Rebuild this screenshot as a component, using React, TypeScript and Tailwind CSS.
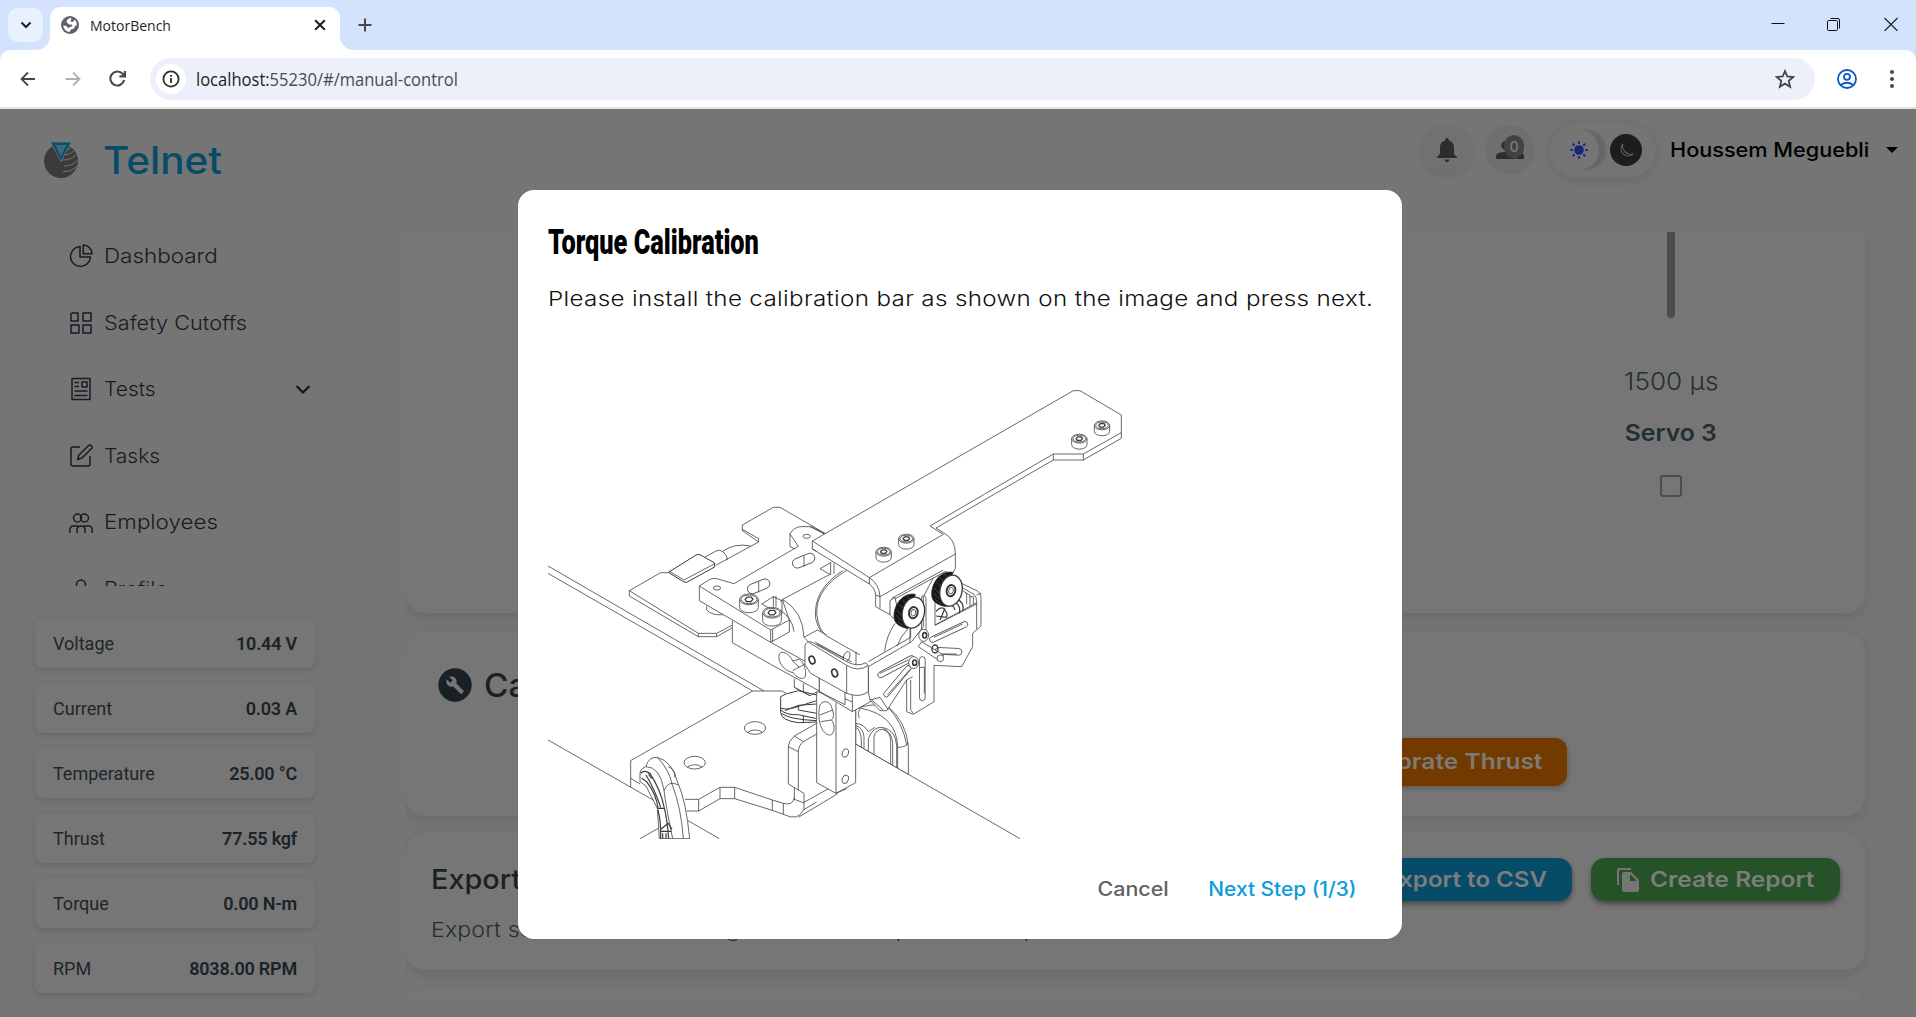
import type { ReactNode } from "react";

function Bolt({ x, y, r = 23, h = 18 }: { x: number; y: number; r?: number; h?: number }) {
  return (
    <g transform={`translate(${x} ${y})`}>
      <path d={`M${-r} 0V${h}A${r} ${r * 0.58} 0 0 0 ${r} ${h}V0`} fill="#fff" />
      <ellipse rx={r} ry={r * 0.58} fill="#fff" />
      <ellipse rx={r - 4} ry={(r - 4) * 0.54} />
      <path d={`M${-r * 0.42} 0L${-r * 0.2} ${-r * 0.24}H${r * 0.25}L${r * 0.42} 0L${r * 0.2} ${r * 0.24}H${-r * 0.25}Z`} strokeWidth="4" />
    </g>
  );
}

function Knob({ x, y }: { x: number; y: number }) {
  return (
    <g transform={`translate(${x} ${y})`}>
      <path d="M6 -55C-30 -62 -59 -25 -58 12C-58 32 -42 42 -16 48Z" fill="#161616" />
      <path d="M-50 -8L-36 8M-52 8L-36 24M-44 -26L-28 -10M-34 -40L-20 -26M-48 26L-30 40M-20 -50L-8 -38" stroke="#777" strokeWidth="1.5" />
      <ellipse rx="33" ry="47" transform="rotate(13)" fill="#fff" strokeWidth="4" />
      <ellipse rx="13" ry="17" transform="rotate(13)" strokeWidth="6" />
      <ellipse rx="7" ry="10" transform="rotate(13)" />
    </g>
  );
}

function Slot({ x, y, w, h, a }: { x: number; y: number; w: number; h: number; a: number }) {
  const r = Math.min(w, h) / 2;
  return <rect x={-w / 2} y={-h / 2} width={w} height={h} rx={r} ry={r} transform={`translate(${x} ${y}) rotate(${a})`} fill="#fff" />;
}

function Illustration() {
  return (
    <svg viewBox="548 340 600 499" className="block h-[499px] w-[600px]" fill="none" stroke="#3a3a3a" strokeWidth="2.3" strokeLinejoin="round">
      <g transform="translate(540 480) scale(.33333)">
        <path d="M24 258L672 633M24 280L638 633M24 780L350 966M300 1076L360 1042M444 1022L538 1076" />
        {/* circuit board and connector */}
        <path d="M268 332V348L475 470H530L576 444M268 332L475 460H530L576 436M475 460V470M530 460V470M268 332L362 278H385" />
        <path d="M527 256L656 186M494 232L528 213Q540 207 550 216Q562 226 562 240M548 214Q585 188 632 198" />
        <path d="M385 277L470 224H480L524 249V261L440 307L430 305Z" fill="#fff" strokeWidth="3" />
        <path d="M387 273L432 300L524 251" />
        <path d="M607 135L700 82H720L855 160M607 135V152L656 186V176L607 148" />
        {/* top mounting plate */}
        <path d="M577 422V488L692 553L838 633L900 668M500 378V390Q515 407 550 404M692 487L803 548" />
        <path d="M478 318L510 298Q518 294 530 296L582 311L775 199L750 162Q760 142 782 140H815L858 164L900 290L728 362L748 420V456L692 487L478 362Z" fill="#fff" stroke="none" />
        <path d="M728 362L748 420V456L692 487L478 362V318L510 298Q518 294 530 296L582 311L775 199L750 162Q760 142 782 140H815L858 164M728 362L880 285" />
        <path d="M478 318L692 450L748 420M692 450V487M698 448V485M750 162V200L765 207M810 140L858 164" />
        <ellipse cx="800" cy="169" rx="11" ry="6" />
        <ellipse cx="531" cy="324" rx="11" ry="6" />
        <Slot x={791} y={242} w={70} h={29} a={-22} />
        <Slot x={656} y={319} w={70} h={29} a={-22} />
        <path d="M792 227V260M656 304V337M665 372L700 350L726 362M700 348V380M708 348V380M665 372L690 386M726 360V400" />
        <path d="M840 266L872 248M840 266L878 288M872 246V284M882 250V287" />
        <Bolt x={627} y={358} r={28} h={24} />
        <Bolt x={696} y={398} r={28} h={24} />
        {/* kidney hole in the side block */}
        <path d="M718 522C710 545 735 575 760 578C768 592 788 602 796 590C800 570 790 545 778 538L758 543C748 520 725 510 718 522ZM758 543L778 562M758 572L795 552" />
        <path d="M763 596V622L810 647L830 636M790 610V636M838 590V633M763 622L810 647" />
        {/* base bracket */}
        <path d="M272 922V842L638 633H725L738 640M272 895L300 912" />
        <ellipse cx="645" cy="744" rx="32" ry="19" />
        <path d="M622 757Q645 743 668 757M442 861Q464 847 486 861" />
        <ellipse cx="464" cy="848" rx="32" ry="19" />
        <path d="M435 958H476L540 922H584L697 960L730 970Q760 978 763 952M440 993H476L540 956H584L697 991L730 1003Q775 1025 790 990L830 966M476 958V993M540 922V956M584 922V956M697 960V991M730 970V1003M775 1012L892 942M790 968L866 926" />
        <path d="M745 912V800Q745 785 763 768L830 730M775 930V815Q776 795 790 785L830 762M745 800L775 815M763 768L790 785M745 912L792 940V990M763 922V960M763 958L790 968" />
        <path d="M722 650V698Q725 722 775 728L830 726M722 650L738 642L775 632L830 645M722 685Q735 690 760 684L830 662M735 692L775 676L830 672M722 690Q740 706 775 704L830 716M725 700Q745 718 830 722M775 676V690L830 700M790 708V727" strokeWidth="3" />
        {/* left hook */}
        <path d="M318 860Q325 830 352 832Q398 845 412 905Q438 960 449 1076H358L352 985L318 918L300 905V880Q302 865 318 860Z" fill="#fff" />
        <path d="M352 832Q388 870 396 912Q424 985 430 1076M318 860Q360 860 372 930Q376 970 398 1076M372 932Q385 900 414 914M385 860Q408 870 404 892" />
        <path d="M302 880Q312 868 330 880Q362 930 372 980M305 895L320 905Q350 945 354 985M318 885Q345 930 362 982M326 880Q330 895 340 895M352 985H372M354 990Q364 1030 362 1076M372 980Q382 1020 386 1076M362 1048L385 1030L396 1048M360 1054H394M378 1060V1076M368 1060V1076" strokeWidth="3.5" />
      </g>

      <g transform="translate(740 640) scale(.33333)">
        {/* right clamp behind the post */}
        <path d="M347 312L840 596" />
        <path d="M347 207Q385 190 440 196Q500 245 505 320V403L347 312Z" fill="#fff" />
        <path d="M360 204Q470 225 473 320V384M473 322Q500 322 505 308M440 196Q490 250 500 315M385 334V296Q398 260 428 262Q468 270 470 318V382M402 344V288Q408 268 428 268Q452 275 452 305V372M458 375V310Q456 275 430 266M347 250Q372 252 385 275L405 262M347 262Q362 268 364 300V322M372 325V290Q370 265 347 256M360 205Q350 220 358 235" />
        {/* vertical post */}
        <path d="M230 155V428L288 460L347 428V190L300 170Z" fill="#fff" />
        <path d="M288 188V460M288 460L320 446" />
        <ellipse cx="316" cy="339" rx="9" ry="13" transform="rotate(18 316 339)" />
        <ellipse cx="316" cy="418" rx="9" ry="13" transform="rotate(18 316 418)" />
        <path d="M240 195C250 178 272 184 276 205C282 220 282 235 274 240C286 252 284 280 272 285C255 288 240 262 238 240C236 225 236 210 240 195ZM240 225L278 210M274 240L242 245" />
        <path d="M238 110V155L315 194V155M337 160V215L395 183M238 155L337 215" fill="#fff" />
      </g>

      <g transform="translate(780 480) scale(.33333)">
        {/* motor body */}
        <path d="M8 358L150 285L200 270Q300 300 345 400L400 470L245 555L140 468L72 472Q62 400 8 358Z" fill="#fff" stroke="none" />
        <path d="M8 358L150 283M8 358Q70 395 72 472L112 450M0 390Q38 415 42 455M200 271Q108 325 110 400Q115 450 140 468L240 525M188 272Q98 330 107 415Q112 440 124 455M72 472L88 488M112 450L140 465M0 365L8 358" />
        <path d="M345 430Q318 470 314 514M385 445Q360 470 352 498M390 440V490" />
        <ellipse cx="200" cy="530" rx="9" ry="16" transform="rotate(20 200 530)" />
        <path d="M228 515V558" />
        {/* angled front plate */}
        <path d="M465 285L545 310L592 333Q604 340 603 356V438L578 460V500L545 560L462 556V665L400 703L380 695V600L320 692H300L270 660L265 636V560L395 485L430 440V350Z" fill="#fff" />
        <path d="M265 545L392 472V442M545 322L582 343Q590 350 590 366V448M590 345L603 340M465 362V435L590 368M465 436L590 372M392 600V690L400 700M380 600L398 590M275 660L310 690M270 660L300 652L325 690M425 470V350Q432 342 438 352V455M545 330L560 340V372M555 338L570 345V378M568 350H580V372" />
        <path d="M468 395Q480 380 490 385Q505 400 500 412M500 380Q520 370 525 390M510 360Q545 370 538 400M520 352Q556 365 548 392M480 420L495 385M468 408L500 412" strokeWidth="3.5" />
        <Slot x={506} y={456} w={125} h={17} a={-25} />
        <Slot x={348} y={560} w={122} h={17} a={-28} />
        <Slot x={352} y={604} w={118} h={16} a={-50} />
        <Slot x={506} y={514} w={80} h={20} a={3} />
        <Slot x={427} y={596} w={17} h={132} a={0} />
        <path d="M420 562H433M433 562V640M300 580L385 540M322 645L390 568M462 472L548 432M480 522L530 522" />
        <path d="M415 500L425 485L490 525L482 545Z" fill="#fff" />
        <circle cx="481" cy="535" r="10" fill="#fff" />
        <ellipse cx="431" cy="466" rx="15" ry="18" fill="#fff" />
        <ellipse cx="434" cy="466" rx="6" ry="8" strokeWidth="5" />
        <ellipse cx="401" cy="548" rx="15" ry="18" fill="#fff" />
        <ellipse cx="404" cy="548" rx="6" ry="8" strokeWidth="5" />
        <ellipse cx="465" cy="507" rx="9" ry="12" strokeWidth="4" />
        {/* front clamp block */}
        <path d="M75 498Q78 482 95 486L200 545Q232 562 258 548L265 560V635Q240 655 200 640L92 580L75 555Z" fill="#fff" />
        <path d="M88 488L200 556V640M200 556Q235 578 265 556M105 486L215 546M110 492L190 534" />
        <ellipse cx="96" cy="540" rx="8" ry="12" transform="rotate(-20 96 540)" strokeWidth="5" />
        <ellipse cx="164" cy="579" rx="8" ry="12" transform="rotate(-20 164 579)" strokeWidth="5" />
        {/* calibration bar */}
        <path d="M97 183L880 -268H900L1024 -195V-125L910 -60H820L468 144L490 158Q528 178 526 225V265L518 280L495 275L335 362L330 404L287 380V345Q285 325 268 312L97 207Z" fill="#fff" />
        <path d="M1024 -142L910 -78H820L450 138L490 163M820 -78V-60M910 -78V-60M97 183L268 293Q298 312 300 350V385M300 350L526 222M268 293L490 163M268 293V312M287 345L300 350M335 355L490 270M97 207L110 214" />
        <path d="M330 362L345 352L355 400L340 415L330 404Z" fill="#fff" />
        <Bolt x={311} y={215} />
        <Bolt x={379} y={176} />
        <Bolt x={898} y={-124} />
        <Bolt x={966} y={-164} />
        <Knob x={400} y={398} />
        <Knob x={513} y={332} />
      </g>
    </svg>
  );
}

function NavItem({ icon, label, stretch, chevron }: { icon: ReactNode; label: string; stretch: string; chevron?: boolean }) {
  return (
    <div className="flex h-[66.5px] shrink-0 items-center pl-[69px]">
      <svg viewBox="0 0 24 24" className="h-[24px] w-[24px]" fill="none" stroke="#161c24" strokeWidth="1.5" strokeLinejoin="round">
        {icon}
      </svg>
      <span className={`ml-[11px] inline-block origin-left text-[20px] font-light text-[#161c24] ${stretch}`}>{label}</span>
      {chevron && (
        <svg viewBox="0 0 16 16" className="mr-[94px] ml-auto h-4 w-4" fill="none" stroke="#11171c" strokeWidth="2.2">
          <path d="M1.5 5L8 11.5L14.5 5" />
        </svg>
      )}
    </div>
  );
}

const readings = [
  ["Voltage", "10.44 V"],
  ["Current", "0.03 A"],
  ["Temperature", "25.00 °C"],
  ["Thrust", "77.55 kgf"],
  ["Torque", "0.00 N-m"],
  ["RPM", "8038.00 RPM"],
];

function BrowserChrome() {
  return (
    <div className="h-[109px] shrink-0 bg-[#d3e3fd]">
      <div className="flex h-[50px]">
        <div className="mt-[8px] ml-[8px] flex h-[34px] w-[35px] items-center justify-center rounded-[10px] bg-[#e9f1fe]">
          <svg viewBox="0 0 12 12" className="h-[12px] w-[12px]" fill="none" stroke="#1f1f1f" strokeWidth="2">
            <path d="M1.5 3.5L6 8L10.5 3.5" />
          </svg>
        </div>
        <div className="relative mt-[7px] ml-[7px] flex h-[43px] w-[290px] items-center rounded-t-[11px] bg-white pb-[7px] pl-[11px]">
          <svg viewBox="0 0 10 10" className="absolute bottom-0 -left-[14px] h-[14px] w-[14px]" fill="#fff"><path d="M10 0V10H0A10 10 0 0 0 10 0Z" /></svg>
          <svg viewBox="0 0 10 10" className="absolute -right-[14px] bottom-0 h-[14px] w-[14px]" fill="#fff"><path d="M0 0V10H10A10 10 0 0 1 0 0Z" /></svg>
          <svg viewBox="0 0 18 18" className="h-[18px] w-[18px]">
            <circle cx="9" cy="9" r="9" fill="#5f6368" />
            <path d="M10.500 2C7 2 6 4 5.500 6L8 8.500H10.500Q12 9 11 10.500L8.500 11L7.500 12.500L5.500 10L2.200 9.500C2.500 13 5.500 16 8.500 16L10 13.500L13 12.500L14 10L15.800 9.500C16 7 15 5 13.500 3.800L12 6L9.500 5.500Z" fill="#fff" />
          </svg>
          <span className="ml-[11px] font-['Open_Sans'] text-[14px] text-[#1f1f1f]">MotorBench</span>
          <svg viewBox="0 0 12 12" className="mr-[14px] ml-auto h-[12px] w-[12px]" stroke="#1f1f1f" strokeWidth="2"><path d="M1.200 1.200L10.800 10.800M10.800 1.200L1.200 10.800" /></svg>
        </div>
        <svg viewBox="0 0 14 14" className="mt-[18px] ml-[18px] h-[14px] w-[14px]" stroke="#474747" strokeWidth="2"><path d="M7 0.500V13.500M0.500 7H13.500" /></svg>
        <div className="mt-[17px] mr-[18px] ml-auto flex">
          <svg viewBox="0 0 14 14" className="h-[14px] w-[14px]" stroke="#111"><path d="M0.500 6.500H13.500" /></svg>
          <svg viewBox="0 0 14 14" className="ml-[42px] h-[14px] w-[14px]" stroke="#111" fill="none"><rect x="0.500" y="3.500" width="10" height="10" rx="1" /><path d="M3.500 1.500H11Q12.500 1.500 12.500 3V11.500" /></svg>
          <svg viewBox="0 0 14 14" className="ml-[43px] h-[14px] w-[14px]" stroke="#222" strokeWidth="1.200"><path d="M0.500 1L13.500 14M13.500 1L0.500 14" /></svg>
        </div>
      </div>
      <div className="flex h-[59px] items-start rounded-t-[10px] border-b-2 border-[#dfe3e2] bg-white">
        <svg viewBox="0 0 16 16" className="mt-[21px] ml-[20px] h-[16px] w-[16px]" stroke="#474747" strokeWidth="1.800" fill="none"><path d="M15 8H1.500M8 1.500L1.500 8L8 14.500" /></svg>
        <svg viewBox="0 0 16 16" className="mt-[21px] ml-[29px] h-[16px] w-[16px]" stroke="#b0b0b0" strokeWidth="1.800" fill="none"><path d="M0.500 8H14M8 1.500L14.500 8L8 14.500" /></svg>
        <svg viewBox="0 0 16 16" className="mt-[20px] ml-[28px] h-[17px] w-[17px]" stroke="#474747" strokeWidth="2" fill="none"><path d="M14.300 9.500A6.600 6.600 0 1 1 12.800 3.600L15 5.500M15 1V6H9.800" /></svg>
        <div className="mt-[8px] ml-[24px] flex h-[42px] w-[1665px] items-center rounded-full bg-[#ebf0fa] pl-[6px]">
          <div className="flex h-[30px] w-[30px] items-center justify-center rounded-full bg-white">
            <svg viewBox="0 0 18 18" className="h-[18px] w-[18px]" fill="none" stroke="#303030" strokeWidth="1.800"><circle cx="9" cy="9" r="7.600" /><path d="M9 8V13M9 5V6.700" /></svg>
          </div>
          <span className="ml-[10px] inline-block origin-left scale-x-[0.945] font-['Open_Sans'] text-[17.5px] text-[#4b4b4b]"><span className="text-[#1f1f1f]">localhost:</span>55230/#/manual-control</span>
          <svg viewBox="0 0 24 24" className="mr-[20px] ml-auto h-[20px] w-[20px]" fill="none" stroke="#474747" strokeWidth="2.200"><path d="M12 2.500L14.800 9L22 9.600L16.500 14.300L18.200 21.300L12 17.600L5.800 21.300L7.500 14.300L2 9.600L9.200 9Z" /></svg>
        </div>
        <svg viewBox="0 0 20 20" className="mt-[19px] ml-[22px] h-[20px] w-[20px]" fill="none" stroke="#0b57d0" strokeWidth="1.800"><circle cx="10" cy="10" r="9" /><circle cx="10" cy="7.800" r="3" /><path d="M3.800 16Q10 11.500 16.200 16" /></svg>
        <svg viewBox="0 0 4 18" className="mt-[20px] ml-[33px] h-[18px] w-[4px]" fill="#474747"><circle cx="2" cy="2" r="2" /><circle cx="2" cy="9" r="2" /><circle cx="2" cy="16" r="2" /></svg>
      </div>
    </div>
  );
}

function Header() {
  return (
    <header className="flex h-[123px] shrink-0 items-start">
      <svg viewBox="0 0 34 36" className="mt-[33px] ml-[44px] h-[36px] w-[34px]">
        <circle cx="17" cy="19" r="17" fill="#3b3b3b" />
        <path d="M18 18Q27 18 32 13M20 24Q29 24 33.500 18M19 29.500Q28 30 33 24M22 8.500Q25 8 27 5.500M21 13Q27 12 30 9" stroke="#757575" strokeWidth="1" fill="none" />
        <path d="M6.500 0H27.500L17 19.500Z" fill="#0a4f6c" stroke="#757575" strokeWidth=".8" />
        <path d="M11.500 3H22.500L17 14Z" fill="#45697a" />
      </svg>
      <span className="mt-[27px] ml-[25px] inline-block origin-left scale-x-[1.065] text-[38px] leading-[48px] font-medium text-[#064c68]">Telnet</span>
      <div className="mt-[12px] ml-auto flex h-[58px] items-center pr-[18px]">
        <div className="flex h-[50px] w-[50px] items-center justify-center rounded-full bg-[#717171] shadow-[0_2px_6px_rgba(0,0,0,0.08)]">
          <svg viewBox="0 0 20 24" className="h-[24px] w-[20px]" fill="#2d2d2d"><path d="M10 0A1.600 1.600 0 0 1 11.700 1.800V2.500C15.500 3.500 17 6.500 17 10V16L20 19V20H0V19L3 16V10C3 6.500 4.500 3.500 8.300 2.500V1.800A1.600 1.600 0 0 1 10 0ZM7.600 21.500H12.400Q12 24 10 24T7.600 21.500Z" /></svg>
        </div>
        <div className="relative ml-[13px] flex h-[50px] w-[50px] items-center justify-center rounded-full bg-[#6f6f6f]">
          <svg viewBox="0 0 28 18" className="h-[18px] w-[28px]" fill="#2e2e2e"><circle cx="9.500" cy="4.500" r="4.300" /><circle cx="19" cy="4.500" r="4.300" /><path d="M0 18V15Q0 11 9.500 11T19 15V18ZM20 18H28V15Q28 11 19 11L20 15Z" /></svg>
          <div className="absolute top-[10px] left-[19px] flex h-[23px] w-[20px] items-center justify-center rounded-full bg-[#424242] text-[14px] font-semibold text-[#757575]">0</div>
        </div>
        <div className="ml-[13px] flex h-[58px] w-[109px] items-center rounded-full border border-[#6d6d6d] bg-[#747474] pl-[10px] shadow-[0_4px_12px_rgba(0,0,0,0.07)]">
          <div className="flex h-[40px] w-[40px] items-center justify-center rounded-full bg-[#757575] shadow-[7px_0_2px_rgba(0,0,0,0.12)]">
            <svg viewBox="0 0 18 18" className="h-[18px] w-[18px]" stroke="#1a237e" strokeWidth="2" strokeLinecap="round" fill="#1a237e"><circle cx="9" cy="9" r="3.800" /><path d="M9 1V2M9 16V17M1 9H2M16 9H17M3.300 3.300L4 4M14 14L14.700 14.700M14.700 3.300L14 4M4 14L3.300 14.700" /></svg>
          </div>
          <div className="ml-[11px] flex h-[32px] w-[32px] items-center justify-center rounded-full bg-[#1d1d1d]">
            <svg viewBox="0 0 24 24" className="h-[17px] w-[17px]" fill="none" stroke="#5e5e5e" strokeWidth="1.500"><path d="M7 2.500A10 10 0 1 0 22 16.500A11.500 11.500 0 0 1 7 2.500Z" /></svg>
          </div>
        </div>
        <div className="ml-[13px] w-[201px] text-[20px] font-medium whitespace-nowrap text-black">
          <span className="inline-block origin-left scale-x-[1.083]">Houssem Meguebli</span>
        </div>
        <svg viewBox="0 0 12 6" className="ml-[15px] h-[6px] w-[12px]"><path d="M0 0H12L6 6Z" /></svg>
      </div>
    </header>
  );
}

function Sidebar() {
  return (
    <aside className="w-[405px] shrink-0">
      <nav className="-mt-[9px] flex h-[363px] flex-col overflow-hidden">
        <NavItem label="Dashboard" stretch="scale-x-[1.12]" icon={<path d="M11 2.500A10 10 0 1 0 21.500 13H11ZM14.300 1V9.700H23Q22.500 2 14.300 1Z" />} />
        <NavItem label="Safety Cutoffs" stretch="scale-x-[1.085]" icon={<path d="M3 2H9V10H2V3ZM14 2H22V10H14ZM2 14H10V22H2ZM14 14H22V22H14Z" />} />
        <NavItem label="Tests" stretch="scale-x-[1.05]" chevron icon={<path d="M3 1.500H21V22.500H3ZM13 5H18V10H13ZM5.500 5.500H10M5.500 9.500H10M5.500 14H18.500M5.500 18.500H18.500" />} />
        <NavItem label="Tasks" stretch="scale-x-[1.05]" icon={<path d="M11 3H4Q2 3 2 5V20Q2 22 4 22H19Q21 22 21 20V12M19 2Q21 0 22.500 2T22 5L13 14L8.500 15.500L10 11Z" />} />
        <NavItem label="Employees" stretch="scale-x-[1.12]" icon={<path d="M0.800 23V20Q1 16 4 16H9M23.200 23V20Q23 16 20 16H15M8 23V20Q8 16 12 16T16 20V23M8.500 4A4 4 0 1 0 8.500 12A4 4 0 1 0 8.500 4M15.500 4A4 4 0 1 0 15.500 12A4 4 0 1 0 15.500 4" />} />
        <NavItem label="Profile" stretch="scale-x-[1.08]" icon={<path d="M12 3A4.500 4.500 0 1 0 12 12A4.500 4.500 0 1 0 12 3" />} />
      </nav>
      <div className="mt-[32px] ml-[35px] flex w-[280px] flex-col gap-[15px] font-['Roboto']">
        {readings.map(([k, v]) => (
          <div key={k} className="flex h-[50px] items-center justify-between rounded-[8px] bg-[#767676] px-[18px] shadow-[0_2px_6px_rgba(0,0,0,0.13)]">
            <span className="text-[18px] text-[#1d272b]">{k}</span>
            <span className="text-[18px] font-semibold tracking-[-0.2px] text-[#1a2327]">{v}</span>
          </div>
        ))}
      </div>
    </aside>
  );
}

function Main() {
  return (
    <main className="h-[769px] w-[1511px] overflow-hidden pr-[51px]">
      <section className="flex h-[381px] justify-end rounded-b-[20px] bg-[#767676] shadow-[0_4px_14px_rgba(0,0,0,0.1)]">
        <div className="mr-[134px] flex w-[120px] flex-col items-center text-[#222f35]">
          <div className="h-[86px] w-[8px] rounded-b-full bg-[#4c4c4e]" />
          <span className="mt-[48px] inline-block scale-x-[1.09] text-[24px] leading-[32px] font-light">1500 µs</span>
          <span className="mt-[19px] inline-block scale-x-[1.075] text-[23px] leading-[32px] font-semibold">Servo 3</span>
          <div className="mt-[26px] h-[22px] w-[22px] rounded-[3px] border-[2.5px] border-[#4c4c4c]" />
        </div>
      </section>
      <section className="mt-[19px] flex h-[184px] justify-between rounded-[20px] bg-[#767676] shadow-[0_4px_14px_rgba(0,0,0,0.1)]">
        <div className="mt-[33px] ml-[33px] flex h-[40px] items-center">
          <svg viewBox="0 0 34 34" className="h-[34px] w-[34px]"><circle cx="17" cy="17" r="16.700" fill="#182125" /><path transform="translate(7.500 7.500) scale(.8)" d="M22.700 19l-9.100-9.100c.9-2.300.4-5-1.500-6.900-2-2-5-2.400-7.400-1.300L9 6 6 9 1.600 4.700C.4 7.100.9 10.100 2.900 12.100c1.900 1.900 4.600 2.400 6.900 1.500l9.100 9.100c.4.4 1 .4 1.400 0l2.300-2.300c.5-.4.5-1.100.1-1.400z" fill="#767676" /></svg>
          <span className="mt-[2px] ml-[12px] inline-block origin-left scale-x-[1.04] text-[32px] font-medium text-[#182125]">Calibration</span>
        </div>
        <div className="mt-[106px] mr-[298px] flex h-[48px] w-[240px] items-center justify-end rounded-[12px] bg-[#733a00] pr-[24px] pb-[2px] text-[21.5px] font-semibold text-[#7e7a75] shadow-[0_2px_6px_rgba(0,0,0,0.25)]">
          <span className="inline-block origin-right scale-x-[1.14] whitespace-nowrap">Calibrate Thrust</span>
        </div>
      </section>
      <section className="mt-[17px] flex h-[137px] justify-between rounded-[20px] bg-[#767676] shadow-[0_4px_14px_rgba(0,0,0,0.1)]">
        <div className="ml-[26px]">
          <div className="mt-[28px] origin-left scale-x-[1.05] text-[27.5px] leading-[36px] font-medium text-[#182125]">Export Data</div>
          <div className="mt-[19px] w-[600px] origin-left scale-x-[1.13] text-[20.5px] leading-[28px] font-light tracking-[0.1px] whitespace-nowrap text-[#222f35]">Export sensor data here or generate a complete test report</div>
        </div>
        <div className="mt-[25px] mr-[25px] flex h-[43px] gap-[19px] text-[21.5px] font-semibold text-[#7d7d7d]">
          <div className="flex h-[43px] w-[220px] items-center justify-end rounded-[14px] bg-[#064c68] pr-[25px] whitespace-nowrap shadow-[0_3px_5px_rgba(0,0,0,0.4)]"><span className="inline-block origin-right scale-x-[1.12]">Export to CSV</span></div>
          <div className="flex h-[43px] w-[249px] items-center rounded-[14px] bg-[#255227] pl-[26px] shadow-[0_3px_5px_rgba(0,0,0,0.4)]">
            <svg viewBox="0 0 22 24" className="h-[24px] w-[22px]" fill="#767676"><path d="M0 17V2Q0 0 2 0H14V2H2V17ZM5 6Q5 4 7 4H14L22 12V22Q22 24 20 24H7Q5 24 5 22ZM13 6V13H20Z" fillRule="evenodd" /></svg>
            <span className="ml-[11px] inline-block origin-left scale-x-[1.14] whitespace-nowrap">Create Report</span>
          </div>
        </div>
      </section>
      <section className="mt-[18px] h-[60px] rounded-t-[20px] bg-[#767676] shadow-[0_2px_10px_rgba(0,0,0,0.04)]" />
    </main>
  );
}

export default function App() {
  return (
    <div className="relative flex h-[1017px] w-[1916px] flex-col overflow-hidden bg-[#757575] font-['Inter',sans-serif]">
      <BrowserChrome />
      <Header />
      <div className="flex">
        <Sidebar />
        <Main />
      </div>
      <div role="dialog" className="absolute top-[190px] left-[518px] flex h-[749px] w-[884px] flex-col rounded-[16px] bg-white px-[30px]">
        <h2 className="mt-[31px] h-[44px] w-[212px] font-['Roboto'] text-[35px] leading-[44px] font-black whitespace-nowrap text-black">
          <span className="inline-block origin-left scale-x-[0.724]">Torque Calibration</span>
        </h2>
        <p className="mt-[20px] w-[700px] origin-left scale-x-[1.18] text-[20.5px] leading-[28px] font-light tracking-[0.28px] whitespace-nowrap text-[#111]">
          Please install the calibration bar as shown on the image and press next.
        </p>
        <div className="mt-[27px]"><Illustration /></div>
        <div className="mt-[36px] mr-[16px] flex justify-end gap-[49px] text-[19.5px] leading-[28px] font-medium">
          <span className="inline-block origin-right scale-x-[1.1] text-[#616161]">Cancel</span>
          <span className="inline-block origin-right scale-x-[1.07] text-[#0c9bdd]">Next Step (1/3)</span>
        </div>
      </div>
    </div>
  );
}
